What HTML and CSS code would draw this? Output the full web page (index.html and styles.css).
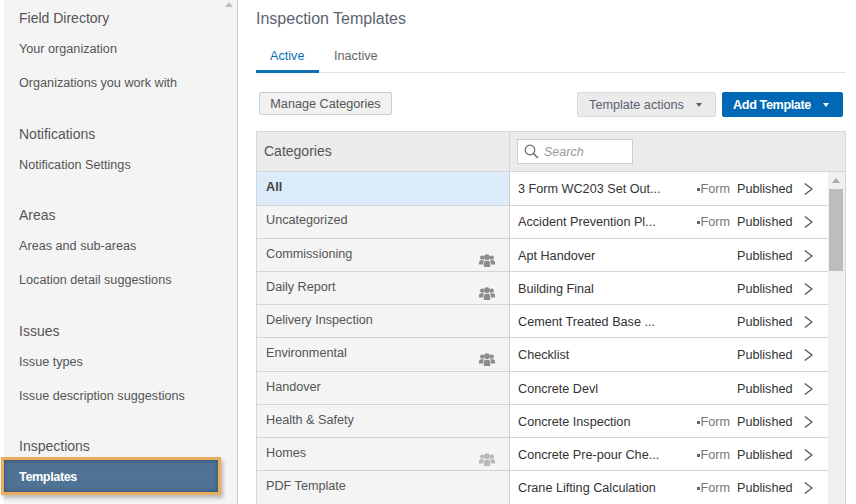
FILE: index.html
```html
<!DOCTYPE html>
<html lang="en">
<head>
<meta charset="utf-8">
<title>Inspection Templates</title>
<link rel="stylesheet" href="styles.css">
</head>
<body>
<svg class="defs" width="0" height="0" aria-hidden="true">
  <symbol id="people" viewBox="0 0 16 13">
    <circle cx="3.2" cy="3.6" r="2.2"/><circle cx="12.8" cy="3.6" r="2.2"/>
    <path d="M0 10.5V8.2C0 6.9 1 6.2 2 6.2h2.4c.4 0 .7.1 1 .3-.8.7-1.3 1.6-1.3 2.7v1.3zM16 10.5V8.2c0-1.3-1-2-2-2h-2.400c-.4 0-.7.1-1 .3.8.7 1.300 1.600 1.300 2.700v1.300z"/>
    <circle cx="8" cy="3.200" r="2.900"/>
    <path d="M4.800 13V9.300C4.800 7.700 5.900 6.800 7 6.800h2c1.100 0 2.200.9 2.200 2.500V13z"/>
  </symbol>
  <symbol id="chev" viewBox="0 0 9 12">
    <path d="M.8 .6 8 6 .8 11.400" fill="none" stroke="currentColor" stroke-width="1.300"/>
  </symbol>
</svg>
<div class="page">
  <nav class="side">
    <div class="scroll-up"></div>
    <section class="group">
      <h3>Field Directory</h3>
      <a>Your organization</a>
      <a>Organizations you work with</a>
    </section>
    <section class="group">
      <h3>Notifications</h3>
      <a>Notification Settings</a>
    </section>
    <section class="group">
      <h3>Areas</h3>
      <a>Areas and sub-areas</a>
      <a>Location detail suggestions</a>
    </section>
    <section class="group">
      <h3>Issues</h3>
      <a>Issue types</a>
      <a>Issue description suggestions</a>
    </section>
    <section class="group">
      <h3>Inspections</h3>
      <a class="selected">Templates</a>
    </section>
  </nav>
  <main class="main">
    <h1>Inspection Templates</h1>
    <div class="tabs">
      <span class="tab active">Active</span>
      <span class="tab">Inactive</span>
    </div>
    <div class="toolbar">
      <button class="btn manage">Manage Categories</button>
      <div class="spacer"></div>
      <button class="btn actions">Template actions<i class="caret"></i></button>
      <button class="btn add">Add Template<i class="caret"></i></button>
    </div>
    <div class="table">
      <div class="head">
        <div class="head-cat">Categories</div>
        <div class="head-search">
          <div class="search">
            <svg class="glass" viewBox="0 0 15 15"><circle cx="6" cy="6" r="4.800" fill="none" stroke="#666" stroke-width="1.200"/><path d="M9.500 9.500 14 14" stroke="#666" stroke-width="1.400"/></svg>
            <span>Search</span>
          </div>
        </div>
      </div>
      <div class="body">
        <div class="cats">
          <div class="cat current">All</div>
          <div class="cat">Uncategorized</div>
          <div class="cat">Commissioning<svg class="people"><use href="#people"/></svg></div>
          <div class="cat">Daily Report<svg class="people"><use href="#people"/></svg></div>
          <div class="cat">Delivery Inspection</div>
          <div class="cat">Environmental<svg class="people"><use href="#people"/></svg></div>
          <div class="cat">Handover</div>
          <div class="cat">Health &amp; Safety</div>
          <div class="cat">Homes<svg class="people faint"><use href="#people"/></svg></div>
          <div class="cat">PDF Template</div>
        </div>
        <div class="list">
          <div class="row"><span class="name">3 Form WC203 Set Out...</span><span class="form">Form</span><span class="status">Published</span><svg class="chev"><use href="#chev"/></svg></div>
          <div class="row"><span class="name">Accident Prevention Pl...</span><span class="form">Form</span><span class="status">Published</span><svg class="chev"><use href="#chev"/></svg></div>
          <div class="row"><span class="name">Apt Handover</span><span class="status">Published</span><svg class="chev"><use href="#chev"/></svg></div>
          <div class="row"><span class="name">Building Final</span><span class="status">Published</span><svg class="chev"><use href="#chev"/></svg></div>
          <div class="row"><span class="name">Cement Treated Base ...</span><span class="status">Published</span><svg class="chev"><use href="#chev"/></svg></div>
          <div class="row"><span class="name">Checklist</span><span class="status">Published</span><svg class="chev"><use href="#chev"/></svg></div>
          <div class="row"><span class="name">Concrete Devl</span><span class="status">Published</span><svg class="chev"><use href="#chev"/></svg></div>
          <div class="row"><span class="name">Concrete Inspection</span><span class="form">Form</span><span class="status">Published</span><svg class="chev"><use href="#chev"/></svg></div>
          <div class="row"><span class="name">Concrete Pre-pour Che...</span><span class="form">Form</span><span class="status">Published</span><svg class="chev"><use href="#chev"/></svg></div>
          <div class="row"><span class="name">Crane Lifting Calculation</span><span class="form">Form</span><span class="status">Published</span><svg class="chev"><use href="#chev"/></svg></div>
        </div>
        <div class="scrollbar">
          <div class="arrow"></div>
          <div class="thumb"></div>
        </div>
      </div>
    </div>
  </main>
</div>
</body>
</html>
```
FILE: styles.css
```css
* { box-sizing: border-box; }
html, body { margin: 0; height: 100%; overflow: hidden; background: #fff; }
body { font-family: "Liberation Sans", Arial, sans-serif; color: #333; }
.defs { position: absolute; }
.page { display: flex; height: 504px; width: 856px; overflow: hidden; }

.side {
  position: relative;
  width: 234px;
  margin-left: 4px;
  padding-top: 8px;
  flex: none;
  background: #f4f4f4;
  border-right: 1px solid #c9c9c9;
}
.scroll-up {
  position: absolute; top: 2px; left: 221px;
  border: 4px solid transparent; border-top: 0;
  border-bottom: 5px solid #bdbdbd;
}
.group { margin-bottom: 24.500px; }
.group h3 {
  margin: 0 0 3px; padding-left: 15px;
  font-weight: 400; font-size: 14px; line-height: 20px; color: #555;
}
.group a {
  display: flex; align-items: center;
  height: 34px; padding: 2px 0 0 15px;
  font-size: 12.650px; color: #555;
}
.group a.selected {
  height: 38px; width: 220px;
  margin: -2px 0 0 -3px; padding: 1px 0 0 15px;
  background: #4f7394;
  border: 3px solid #e9ad5c;
  box-shadow: inset 0 0 5px #2f4f6c, 2px 3px 4px rgba(0,0,0,.25);
  color: #fff; font-weight: 700; letter-spacing: -.4px;
}

.main { flex: 1; min-width: 0; padding: 0 10px 0 18px; }
h1 {
  margin: 0; height: 37px;
  font-weight: 400; font-size: 16px; line-height: 37px; color: #5b6370;
}
.tabs { display: flex; height: 36px; border-bottom: 1px solid #e4e4e4; }
.tab { padding: 12px 14px 0; width: 63px; font-size: 12.650px; color: #666; white-space: nowrap; }
.tab.active { color: #0c70b8; border-bottom: 3px solid #0c70b8; margin-bottom: -1px; }
.tab + .tab { margin-left: 1px; }

.toolbar { display: flex; align-items: flex-start; padding: 19px 3px 0; height: 58px; }
.spacer { flex: 1; }
.btn {
  font-family: inherit; font-size: 12.650px; padding: 0;
  border-radius: 2px; border: 1px solid #ccd; background: #f1f1f1; color: #555;
}
.manage { width: 133px; height: 23px; border-color: #c6ced8; }
.actions { width: 139px; height: 25px; padding-right: 2px; background: #ebebeb; border-color: #dadada; margin-right: 6px; color: #5a6270; }
.add { width: 121px; height: 25px; padding-right: 3px; background: #0068b5; border-color: #0068b5; color: #fff; font-weight: 700; letter-spacing: -.4px; }
.caret {
  display: inline-block; margin-left: 12px; vertical-align: 2px;
  border: 3px solid transparent; border-bottom: 0;
  border-top: 4px solid currentColor;
}

.table { border: 1px solid #d6d6d6; border-bottom: 0; margin-right: 0; }
.head { display: flex; height: 40.400px; background: #ebebeb; border-bottom: 1px solid #d6d6d6; }
.head-cat { width: 253px; padding: 0 7px; line-height: 39px; font-size: 14px; color: #555; border-right: 1px solid #d6d6d6; }
.head-search { padding: 7px 7px 0; }
.search {
  display: flex; align-items: center; gap: 5px;
  width: 116px; height: 25px; padding-left: 6px;
  background: #fff; border: 1px solid #ccc;
  font-size: 12.500px; font-style: italic; color: #999;
}
.glass { width: 15px; height: 15px; }

.body { display: flex; height: 340px; overflow: hidden; }
.cats { width: 253px; flex: none; border-right: 1px solid #ccc; }
.cat {
  position: relative;
  height: 33.220px; padding: 6.800px 9px 0;
  background: #f4f4f4; border-bottom: 1px solid #d4d4d4;
  font-size: 12.650px; line-height: 16px; color: #555;
}
.cat.current { background: #dcecfa; font-weight: 700; color: #444; }
.people { position: absolute; left: 222px; top: 15px; width: 16px; height: 13px; fill: #8c8c8c; }
.people.faint { fill: #b9b9b9; }

.list { flex: 1; min-width: 0; }
.row {
  display: flex; align-items: center;
  height: 33.220px; padding: 1.400px 0 0 8px;
  border-bottom: 1px solid #d4d4d4;
  font-size: 12.650px; color: #333;
}
.name { flex: 1; white-space: nowrap; overflow: hidden; }
.form { color: #777; margin-right: 7px; position: relative; }
.form::before {
  content: ""; display: inline-block; width: 3px; height: 3px; margin-right: 1px;
  vertical-align: 2px; background: #666;
}
.status { width: 55px; }
.chev { width: 9px; height: 12px; margin: 0 15px 0 12px; color: #555; }

.scrollbar { width: 17px; flex: none; background: #f0f0f0; padding: 0 2px 0 1px; position: relative; }
.arrow {
  width: 0; margin: 6px auto 0;
  border: 4px solid transparent; border-top: 0;
  border-bottom: 5px solid #aaa;
}
.thumb { height: 82px; margin-top: 6px; background: #bdbdbd; }
```
